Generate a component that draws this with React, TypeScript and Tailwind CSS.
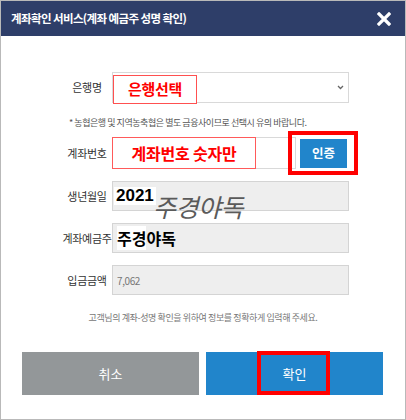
import React from "react";

const kr = "font-['Noto_Sans_CJK_KR',sans-serif]";

function Label({ children }: { children: React.ReactNode }) {
  return (
    <div className="w-[50px] flex justify-center whitespace-nowrap text-[11px] tracking-[-0.3px] text-[#333]">
      {children}
    </div>
  );
}

export default function App() {
  return (
    <div className={`${kr} w-[406px] h-[420px] border border-[#b9b9b9] bg-white flex flex-col`}>
      {/* header */}
      <div className="h-[35px] bg-[#2e3e69] flex items-center justify-between pl-[10px] pr-[14px]">
        <span className="text-white font-bold text-[11.5px] tracking-[-0.6px]">
          계좌확인 서비스(계좌 예금주 성명 확인)
        </span>
        <svg width="14" height="14" viewBox="0 0 14 14">
          <path d="M2 2 L12 12 M12 2 L2 12" stroke="#fff" strokeWidth="3.2" strokeLinecap="square" />
        </svg>
      </div>

      <div className="pt-[36px] flex flex-col">
        {/* bank */}
        <div className="flex items-center h-[31px] pl-[61px]">
          <Label>은행명</Label>
          <div className="relative w-[237px] h-[31px] border border-[#d9d9d9] bg-white">
            <div className="absolute left-0 top-[2px] w-[84px] h-[29px] border border-[#ff5050] bg-white flex items-center justify-center">
              <span className="text-[#ff0000] font-bold text-[15px] tracking-[-0.3px]">은행선택</span>
            </div>
            <svg className="absolute right-[4px] top-[12px]" width="7" height="5" viewBox="0 0 7 5">
              <path d="M1 1 L3.5 3.5 L6 1" stroke="#666" strokeWidth="1.3" fill="none" />
            </svg>
          </div>
        </div>

        <div className="mt-[13px] h-[14px] leading-[14px] pl-[68px] text-[9px] tracking-[-0.45px] text-[#555] whitespace-nowrap">
          * 농협은행 및 지역농축협은 별도 금융사이므로 선택시 유의 바랍니다.
        </div>

        {/* account */}
        <div className="mt-[7px] flex items-center h-[32px] pl-[61px]">
          <Label>계좌번호</Label>
          <div className="relative w-[184px] h-[32px] border border-[#d9d9d9]">
            <div className="absolute left-[-1px] top-[-1px] w-[144px] h-[32px] border border-[#ff5a5a] bg-white flex items-center justify-center">
              <span className="text-[#ff0000] font-bold text-[16px] tracking-[-0.2px]">계좌번호 숫자만</span>
            </div>
          </div>
          <div className="relative ml-[4px]">
            <button className="w-[47px] h-[29px] bg-[#2185cb] text-white font-bold text-[12.5px] flex items-center justify-center">
              인증
            </button>
            <div className="absolute left-[-12px] top-[-8px] w-[70px] h-[44px] border-[4px] border-[#ff0000]" />
          </div>
        </div>

        {/* birth */}
        <div className="mt-[12px] flex items-center h-[30px] pl-[61px]">
          <Label>생년월일</Label>
          <div className="relative w-[237px] h-[30px] border border-[#d4d4d4] bg-[#eeeeee]">
            <span className="absolute left-[1px] top-[5px] bg-white px-[2px] h-[18px] leading-[18px] font-['Liberation_Sans',sans-serif] font-bold text-[17px] text-black">
              2021
            </span>
            <span className="absolute left-[40px] top-[9px] italic text-[25px] leading-[30px] text-[#5a5a5a] tracking-[-0.5px] whitespace-nowrap">
              주경야독
            </span>
          </div>
        </div>

        {/* holder */}
        <div className="mt-[12px] flex items-center h-[30px] pl-[61px]">
          <Label>계좌예금주</Label>
          <div className="relative w-[237px] h-[30px] border border-[#d4d4d4] bg-[#eeeeee] flex items-center pl-[4px]">
            <span className="font-bold text-[16px] text-black leading-[20px]">
              <span className="bg-white">주경</span>야독
            </span>
          </div>
        </div>

        {/* amount */}
        <div className="mt-[12px] flex items-center h-[30px] pl-[61px]">
          <Label>입금금액</Label>
          <div className="w-[237px] h-[30px] border border-[#d4d4d4] bg-[#eeeeee] flex items-center pl-[4px]">
            <span className="text-[10px] text-[#777] tracking-[-0.4px]">7,062</span>
          </div>
        </div>

        <div className="mt-[16px] h-[14px] leading-[14px] text-center text-[9px] tracking-[-0.4px] text-[#777] whitespace-nowrap">
          고객님의 계좌-성명 확인을 위하여 정보를 정확하게 입력해 주세요.
        </div>

        {/* buttons */}
        <div className="mt-[27px] flex gap-[7px] pl-[21px]">
          <button className="w-[177px] h-[43px] bg-[#939799] text-white text-[13px] flex items-center justify-center">
            취소
          </button>
          <div className="relative">
            <button className="w-[177px] h-[43px] bg-[#2185cb] text-white text-[13px] flex items-center justify-center">
              확인
            </button>
            <div className="absolute left-[51px] top-[-1px] w-[73px] h-[44px] border-[4px] border-[#ff0000]" />
          </div>
        </div>
      </div>
    </div>
  );
}
